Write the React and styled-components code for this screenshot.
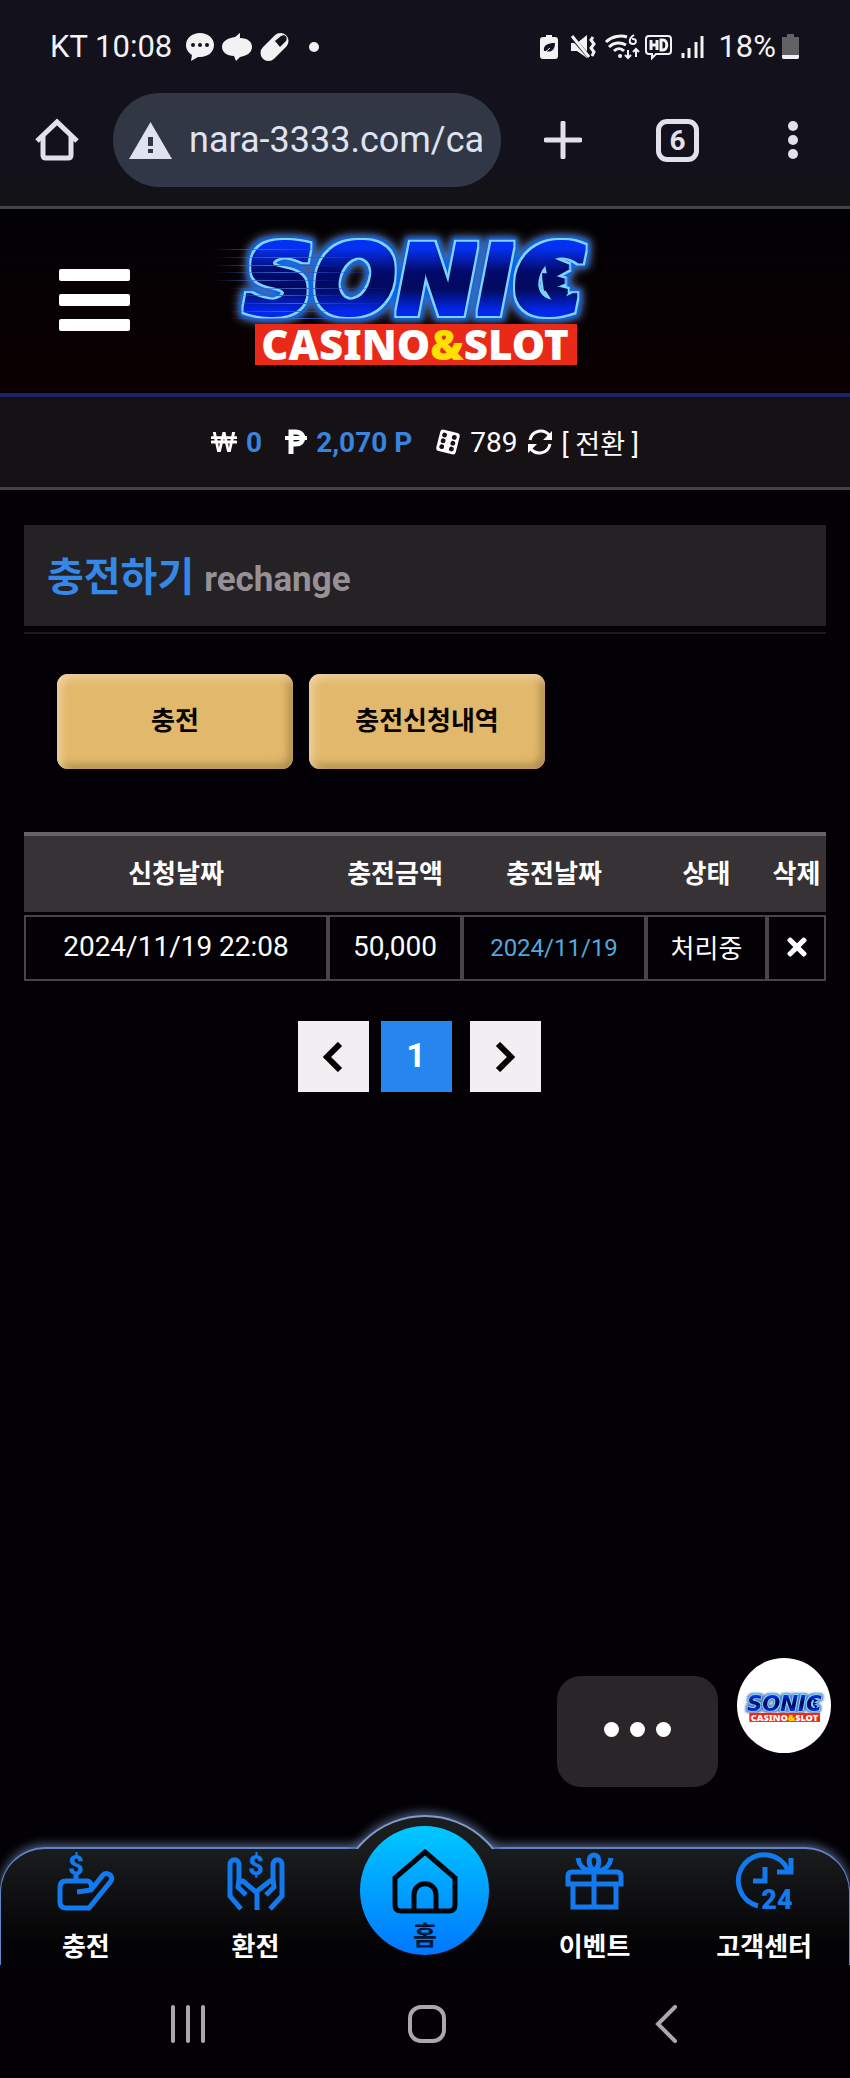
import React from 'react';
import styled, { createGlobalStyle } from 'styled-components';
import { FaTimes, FaWonSign } from 'react-icons/fa';

const tabs = [
	{ label: '충전', icon: <DepositIcon /> },
	{ label: '환전', icon: <WithdrawIcon /> },
	{ label: '홈', icon: <HouseIcon />, home: true },
	{ label: '이벤트', icon: <GiftIcon /> },
	{ label: '고객센터', icon: <SupportIcon /> },
];

const requests = [{ requested: '2024/11/19 22:08', amount: '50,000', charged: '2024/11/19', status: '처리중' }];

export default function App() {
	return (
		<Page>
			<GlobalStyle />
			<StatusBar />
			<BrowserBar />
			<Header>
				<MenuButton aria-label="메뉴">
					<span />
					<span />
					<span />
				</MenuButton>
				<LogoLink href="#" aria-label="SONIC CASINO&SLOT">
					<Logo id="main" width="410" height="155" />
				</LogoLink>
			</Header>
			<Balance>
				<FaWonSign size="26" color="#fff" />
				<Amount>0</Amount>
				<PointIcon />
				<Amount>2,070 P</Amount>
				<DiceIcon />
				<span>789</span>
				<RefreshIcon />
				<ConvertButton>[ 전환 ]</ConvertButton>
			</Balance>
			<Main>
				<Title>
					충전하기 <small>rechange</small>
				</Title>
				<Actions>
					<GoldButton>충전</GoldButton>
					<GoldButton>충전신청내역</GoldButton>
				</Actions>
				<RequestTable />
				<Pager aria-label="페이지">
					<PageButton aria-label="이전">
						<svg width="20" height="30" viewBox="0 0 20 30">
							<path d="M17 2L4 15l13 13" fill="none" stroke="#000" strokeWidth="6" />
						</svg>
					</PageButton>
					<PageButton $current>1</PageButton>
					<PageButton aria-label="다음">
						<svg width="20" height="30" viewBox="0 0 20 30">
							<path d="M3 2l13 13L3 28" fill="none" stroke="#000" strokeWidth="6" />
						</svg>
					</PageButton>
				</Pager>
			</Main>
			<Floating>
				<MoreButton aria-label="더보기">
					<i />
					<i />
					<i />
				</MoreButton>
				<ChatButton aria-label="SONIC">
					<Logo id="chat" width="90" height="34" />
				</ChatButton>
			</Floating>
			<TabBar>
				<Bump />
				{tabs.map((tab) => (
					<Tab key={tab.label} href="#" $home={tab.home}>
						{tab.icon}
						<span>{tab.label}</span>
					</Tab>
				))}
			</TabBar>
			<SystemBar />
		</Page>
	);
}

function RequestTable() {
	return (
		<Table>
			<colgroup>
				<col />
				<col width="134" />
				<col width="184" />
				<col width="121" />
				<col width="59" />
			</colgroup>
			<thead>
				<tr>
					<th>신청날짜</th>
					<th>충전금액</th>
					<th>충전날짜</th>
					<th>상태</th>
					<th>삭제</th>
				</tr>
			</thead>
			<tbody>
				{requests.map((r) => (
					<tr key={r.requested}>
						<td>{r.requested}</td>
						<td>{r.amount}</td>
						<td>
							<ChargedDate>{r.charged}</ChargedDate>
						</td>
						<StatusCell>{r.status}</StatusCell>
						<td>
							<DeleteButton aria-label="삭제">
								<FaTimes size="28" />
							</DeleteButton>
						</td>
					</tr>
				))}
			</tbody>
		</Table>
	);
}

function StatusBar() {
	return (
		<PhoneStatus>
			<StatusGroup>
				<span>KT 10:08</span>
				<svg width="140" height="30" viewBox="0 0 140 30" fill="#f2f2f4">
					<path d="M14 1C6 1 0 6 0 13c0 5 3 8 6 10l-1 6 7-4h2c8 0 14-5 14-12S22 1 14 1z" />
					<path d="M49 5c2-1 4-4 5-4v5c8 0 12 4 12 9 0 6-6 9-12 10l-4 4-2-5c-7 0-12-4-12-9 0-6 6-9 13-10z" />
					<rect x="72" y="7" width="33" height="16" rx="8" transform="rotate(-45 88.500 15)" />
					<path d="M89 9l6-5c4-2 7 1 5 5l-6 6z" fill="#13111b" />
					<circle cx="128" cy="15" r="5" />
					<g fill="#13111b">
						<circle cx="7" cy="13" r="2" />
						<circle cx="14" cy="13" r="2" />
						<circle cx="21" cy="13" r="2" />
					</g>
				</svg>
			</StatusGroup>
			<StatusGroup>
				<svg width="164" height="28" viewBox="0 0 164 28" fill="none" stroke="#f2f2f4" strokeWidth="2">
					<path d="M6 2h6v2h3q3 0 3 3v16q0 3-3 3H3q-3 0-3-3V7q0-3 3-3h3z" fill="#f2f2f4" stroke="none" />
					<path d="M4 18c-1-6 4-8 11-8 0 7-4 10-9 8" fill="#13111b" stroke="none" />
					<path d="M3 21l7-6" stroke="#f2f2f4" strokeWidth="1" />
					<path d="M31 10h6l10-8v23l-10-7h-6z" fill="#f2f2f4" stroke="none" />
					<path d="M30 2l20 23" stroke="#13111b" strokeWidth="4" />
					<path d="M32 3l17 21" strokeWidth="3" />
					<path d="M53 4l-2 3 3 4-3 4 3 4-2 4" strokeWidth="3" />
					<path d="M66 9c6-6 15-7 21-5M69 14c5-5 12-5 17-2M74 18c3-3 7-3 10 0" strokeWidth="3" />
					<path d="M80 23h.1" strokeWidth="4" strokeLinecap="round" />
					<path d="M94 2c-6 4-5 9-1 9s4-6-1-5M88 17v8m-3-3l3 3 3-3M96 24v-8m-3 3l3-3 3 3" />
					<path d="M109 3h19q3 0 3 3v12q0 3-3 3h-12l-4 4v-4h-3q-3 0-3-3V6q0-3 3-3z" />
					<path d="M111 7v10m0-5h6m0-5v10M121 7v10h2c5 0 5-10 0-10z" strokeWidth="3" />
					<path d="M143 25v-5M149 25V15M156 25V9M162 25V3" strokeWidth="3" />
				</svg>
				<span>18%</span>
				<svg width="17" height="25" viewBox="0 0 17 25">
					<path d="M5 0h7v3h5v22H0V3h5z" fill="#626166" />
					<path d="M0 21h17v2q0 2-2 2H2q-2 0-2-2z" fill="#f2f2f4" />
				</svg>
			</StatusGroup>
		</PhoneStatus>
	);
}

function BrowserBar() {
	return (
		<Toolbar>
			<ToolButton aria-label="홈">
				<svg width="44" height="44" viewBox="0 0 44 44" fill="none" stroke="#e3e0ec" strokeWidth="5">
					<path d="M2 23L22 4l20 19" />
					<path d="M8 18v19q0 3 3 3h22q3 0 3-3V18" />
				</svg>
			</ToolButton>
			<Address>
				<svg width="43" height="37" viewBox="0 0 43 37">
					<path d="M21.500 0L43 37H0z" fill="#dfe2ef" />
					<path d="M19 15h5v9h-5zM19 27h5v4h-5z" fill="#323743" />
				</svg>
				<input aria-label="주소" defaultValue="nara-3333.com/cash" />
			</Address>
			<ToolActions>
				<ToolButton aria-label="새 탭">
					<svg width="38" height="38" viewBox="0 0 38 38">
						<path d="M19 2v34M2 19h34" stroke="#e3e0ec" strokeWidth="5" strokeLinecap="round" />
					</svg>
				</ToolButton>
				<ToolButton aria-label="탭 6개">
					<TabCount>6</TabCount>
				</ToolButton>
				<ToolButton aria-label="더보기">
					<svg width="10" height="38" viewBox="0 0 10 38" fill="#e3e0ec">
						<circle cx="5" cy="5" r="5" />
						<circle cx="5" cy="19" r="5" />
						<circle cx="5" cy="33" r="5" />
					</svg>
				</ToolButton>
			</ToolActions>
		</Toolbar>
	);
}

function SystemBar() {
	return (
		<SystemNav>
			<button aria-label="최근 앱">
				<svg width="34" height="38" viewBox="0 0 34 38">
					<path d="M2 2v34M17 2v34M32 2v34" stroke="#aaa8ad" strokeWidth="4" strokeLinecap="round" />
				</svg>
			</button>
			<button aria-label="홈 화면">
				<svg width="38" height="38" viewBox="0 0 38 38">
					<rect x="2" y="2" width="34" height="34" rx="11" fill="none" stroke="#aaa8ad" strokeWidth="4" />
				</svg>
			</button>
			<button aria-label="뒤로">
				<svg width="22" height="38" viewBox="0 0 22 38">
					<path d="M20 2L3 19l17 17" fill="none" stroke="#aaa8ad" strokeWidth="4" strokeLinecap="round" />
				</svg>
			</button>
		</SystemNav>
	);
}

function Logo({ id, width, height }) {
	return (
		<svg width={width} height={height} viewBox="208 215 410 155" overflow="visible" aria-hidden="true">
			<defs>
				<linearGradient id={`${id}-fill`} gradientUnits="userSpaceOnUse" x1="0" y1="243" x2="0" y2="317">
					<stop offset="0.05" stopColor="#0430f0" />
					<stop offset="0.35" stopColor="#020a6c" />
					<stop offset="0.65" stopColor="#020a5c" />
					<stop offset="0.95" stopColor="#0228f0" />
				</linearGradient>
				<linearGradient id={`${id}-speed`}>
					<stop offset="0" stopColor="#3b62c8" stopOpacity="0" />
					<stop offset="0.4" stopColor="#3b62c8" />
					<stop offset="1" stopColor="#1034d8" stopOpacity="0" />
				</linearGradient>
				{/* fattened letters, cyan edge, solid blue rim, soft grey halo */}
				<filter id={`${id}-glow`} x="-10%" y="-30%" width="120%" height="160%" colorInterpolationFilters="sRGB">
					<feMorphology in="SourceAlpha" operator="dilate" radius="7" result="wide" />
					<feGaussianBlur in="wide" stdDeviation="5" result="soft" />
					<feFlood floodColor="#6379a2" />
					<feComposite in2="soft" operator="in" result="halo" />
					<feMorphology in="SourceAlpha" operator="dilate" radius="6" result="near" />
					<feGaussianBlur in="near" stdDeviation="2" result="nearSoft" />
					<feFlood floodColor="#0a62ea" />
					<feComposite in2="nearSoft" operator="in" result="rim" />
					<feMorphology in="SourceAlpha" operator="dilate" radius="4" result="edge" />
					<feFlood floodColor="#7fd4ff" />
					<feComposite in2="edge" operator="in" result="cyan" />
					<feMorphology in="SourceGraphic" operator="dilate" radius="2" result="fat" />
					<feMerge>
						<feMergeNode in="halo" />
						<feMergeNode in="rim" />
						<feMergeNode in="cyan" />
						<feMergeNode in="fat" />
					</feMerge>
				</filter>
			</defs>
			<g filter={`url(#${id}-glow)`} fill={`url(#${id}-fill)`}>
				<text x="244" y="314" fontFamily="'DejaVu Sans', sans-serif" fontWeight="700" fontStyle="italic" fontSize="97">
					SONIC
				</text>
				<path d="M546 258l22 9-18 10zM544 275l20 6-18 8zM546 286l20 5-8 14z" />
			</g>
			{[249, 257, 265, 272, 280, 288, 295, 303, 311, 318].map((y, i) => (
				<rect key={y} x={i < 5 ? 214 : 228} y={y} width={i % 2 ? 170 : 130} height="1" fill={`url(#${id}-speed)`} />
			))}
			<rect x="255" y="324" width="322" height="41" fill="#ea2a18" />
			<text x="415" y="360" textAnchor="middle" fontFamily="'Noto Sans', sans-serif" fontWeight="900" fontSize="42" fill="#fff">
				CASINO<tspan fill="#ffe100">&amp;</tspan>SLOT
			</text>
		</svg>
	);
}

function PointIcon() {
	return (
		<svg width="22" height="26" viewBox="0 0 22 26" fill="none" stroke="#fff">
			<path d="M6 25V3h5c9 0 9 12 0 12H6" strokeWidth="5" />
			<path d="M0 9h22" strokeWidth="4" />
		</svg>
	);
}

function DiceIcon() {
	return (
		<svg width="26" height="26" viewBox="0 0 26 26">
			<g transform="rotate(14 13 13)">
				<rect x="3" y="2" width="20" height="22" rx="3" fill="#fff" />
				<g fill="#15101a">
					<circle cx="8" cy="7" r="2.400" />
					<circle cx="8" cy="13" r="2.400" />
					<circle cx="8" cy="19" r="2.400" />
					<circle cx="18" cy="7" r="2.400" />
					<circle cx="18" cy="13" r="2.400" />
					<circle cx="18" cy="19" r="2.400" />
				</g>
			</g>
		</svg>
	);
}

function RefreshIcon() {
	return (
		<svg width="26" height="26" viewBox="0 0 26 26">
			<path d="M3 11C5 1 17-1 23 7M23 15C21 25 9 27 3 19" fill="none" stroke="#fff" strokeWidth="3" />
			<path d="M25 2v9h-9zM1 24v-9h9z" fill="#fff" />
		</svg>
	);
}

function DepositIcon() {
	return (
		<TabIcon viewBox="0 0 57 57">
			<text x="19" y="22" textAnchor="middle" fontSize="27">$</text>
			<path d="M19 22v6" />
			<path d="M20 39l14-2c2-5-1-9-4-9H9q-6 0-6 6v15q0 6 6 6h23l22-27c3-5-4-10-8-6L34 37" />
		</TabIcon>
	);
}

function WithdrawIcon() {
	return (
		<TabIcon viewBox="0 0 57 57">
			<text x="29" y="22" textAnchor="middle" fontSize="27">$</text>
			<path d="M14 56L3 43V12c0-7 9-7 9 0v14l-1 8 8 8" />
			<path d="M43 56l12-13V12c0-7-9-7-9 0v14l1 8-8 8" />
			<path d="M12 29l4-1 13 11 14-11 3 1M30 57V38" />
		</TabIcon>
	);
}

function HouseIcon() {
	return (
		<svg width="66" height="66" viewBox="0 0 66 66" fill="none" stroke="#02060c" strokeWidth="5">
			<path d="M3 29L33 3l30 26v27q0 6-6 6H9q-6 0-6-6z" />
			<path d="M22 62V46c0-15 22-15 22 0v16" />
		</svg>
	);
}

function GiftIcon() {
	return (
		<TabIcon viewBox="0 0 57 57">
			<path d="M2 31V23q0-4 4-4h45q4 0 4 4v8zM7 31v23h43V31M28 19v35" />
			<path d="M28 18c-7-6-6-16 0-16s7 10 0 16zM12 5c1 7 4 11 12 13M45 5c-1 7-4 11-12 13" />
		</TabIcon>
	);
}

function SupportIcon() {
	return (
		<TabIcon viewBox="0 0 57 57">
			<path d="M22 53A26 26 0 1 1 52 17" />
			<path d="M55 5v14H41M29 14v14H17" />
			<text x="41" y="56" textAnchor="middle" fontSize="27">24</text>
		</TabIcon>
	);
}

const kr = `Roboto, 'Noto Sans CJK KR', sans-serif`;

const GlobalStyle = createGlobalStyle`
	* {
		box-sizing: border-box;
	}
	body {
		margin: 0;
		background: #030105;
		color: #fff;
		font-family: ${kr};
	}
	button {
		padding: 0;
		border: 0;
		background: none;
		color: inherit;
		font: inherit;
		cursor: pointer;
	}
	a {
		color: inherit;
		text-decoration: none;
	}
	svg {
		flex-shrink: 0;
	}
`;

const Page = styled.div`
	display: flex;
	flex-direction: column;
	min-height: 100vh;
`;

const PhoneStatus = styled.div`
	display: flex;
	justify-content: space-between;
	align-items: center;
	height: 93px;
	padding: 0 51px 0 50px;
	background: #13111b;
	color: #f2f2f4;
	font-size: 31px;
`;

const StatusGroup = styled.div`
	display: flex;
	align-items: center;
	gap: 14px;

	svg + span {
		margin-right: -8px;
	}
`;

const Toolbar = styled.div`
	display: flex;
	align-items: center;
	padding-bottom: 19px;
	background: linear-gradient(#13111b 70%, #121315);
	border-bottom: 3px solid #454347;
`;

const ToolButton = styled.button`
	display: flex;
	justify-content: center;
	align-items: center;
	min-width: 113px;
	height: 94px;
`;

const Address = styled.div`
	flex: 1;
	display: flex;
	align-items: center;
	gap: 17px;
	min-width: 0;
	height: 94px;
	padding: 0 19px 0 16px;
	border-radius: 47px;
	background: linear-gradient(#323743, #323749);

	input {
		flex: 1;
		min-width: 0;
		padding: 0;
		border: 0;
		background: none;
		color: #dfe2ef;
		font: 36px ${kr};
	}
`;

const ToolActions = styled.div`
	display: grid;
	grid-template-columns: repeat(3, 1fr);
	width: 345px;
	margin-left: 4px;
`;

const TabCount = styled.span`
	width: 43px;
	height: 43px;
	border: 5px solid #e3e0ec;
	border-radius: 11px;
	color: #e3e0ec;
	font: bold 28px/33px ${kr};
`;

const Header = styled.header`
	display: flex;
	align-items: center;
	justify-content: space-between;
	height: 188px;
	padding: 0 232px 0 59px;
	border-bottom: 4px solid #1b2468;
	background: linear-gradient(#020104, #0b0001);
`;

const MenuButton = styled.button`
	display: flex;
	flex-direction: column;
	gap: 13px;
	width: 71px;
	padding-bottom: 2px;

	span {
		height: 12px;
		border-radius: 2px;
		background: #fff;
	}
`;

const LogoLink = styled.a`
	display: flex;
	padding-bottom: 18px;
`;

const Balance = styled.div`
	display: flex;
	justify-content: center;
	align-items: center;
	gap: 9px;
	height: 93px;
	border-bottom: 3px solid #454247;
	background: #161115;
	font-size: 28px;
`;

const Amount = styled.b`
	margin-right: 14px;
	color: #3984dc;
`;

const ConvertButton = styled.button`
	font-size: 27px;
`;

const Main = styled.main`
	flex: 1;
	padding: 35px 24px;
`;

const Title = styled.h1`
	margin: 0 0 48px;
	padding: 5px 23px 0;
	background: #252225;
	color: #3388e8;
	font-size: 40px;
	line-height: 96px;
	box-shadow: 0 6px #030105, 0 8px #1b1a1c;

	small {
		color: #979196;
		font-size: 35px;
		line-height: 1;
	}
`;

const Actions = styled.div`
	display: flex;
	gap: 16px;
	padding-left: 33px;
`;

const GoldButton = styled.button`
	width: 236px;
	height: 95px;
	padding-bottom: 6px;
	border-radius: 11px;
	background: #e2b86c;
	box-shadow: inset 4px 4px 8px #f0d3a2, inset -4px -4px 8px #a98648;
	color: #080400;
	font-size: 26px;
	font-weight: bold;
`;

const Table = styled.table`
	width: 100%;
	margin-top: 63px;
	border-spacing: 0;
	table-layout: fixed;
	text-align: center;
	font-size: 28px;

	th {
		height: 83px;
		padding: 0 0 5px;
		border-top: 4px solid #676266;
		border-bottom: 3px solid #030105;
		background: #373236;
		font-size: 26px;
	}

	td {
		height: 66px;
		padding: 0 0 3px;
		border: 2px solid #484448;
	}
`;

const ChargedDate = styled.span`
	color: #55a7dd;
	font-size: 24px;
`;

const StatusCell = styled.td`
	font-size: 26px;
`;

const DeleteButton = styled.button`
	display: flex;
	margin: auto;
`;

const Pager = styled.nav`
	display: flex;
	justify-content: center;
	gap: 12px;
	margin-top: 40px;
	padding-right: 12px;
`;

const PageButton = styled.button`
	display: flex;
	justify-content: center;
	align-items: center;
	width: 71px;
	height: 71px;
	margin-right: ${(p) => (p.$current ? '6px' : '0')};
	padding-bottom: ${(p) => (p.$current ? '4px' : '0')};
	background: ${(p) => (p.$current ? '#2785ef' : '#f2eef2')};
	font-size: 34px;
	font-weight: bold;
`;

const Floating = styled.div`
	display: flex;
	justify-content: flex-end;
	gap: 19px;
	padding: 0 19px 60px;
`;

const MoreButton = styled.button`
	display: flex;
	justify-content: center;
	align-items: center;
	gap: 11px;
	width: 161px;
	height: 111px;
	margin-top: 18px;
	padding-bottom: 4px;
	border-radius: 24px;
	background: #2a2529;

	i {
		width: 15px;
		height: 15px;
		border-radius: 50%;
		background: #fff;
	}
`;

const ChatButton = styled.button`
	display: flex;
	justify-content: center;
	align-items: center;
	width: 94px;
	height: 95px;
	border-radius: 50%;
	background: #fff;
`;

const TabBar = styled.nav`
	position: relative;
	display: grid;
	grid-template-columns: repeat(5, 1fr);
	height: 118px;
	border: solid #5f86c8;
	border-width: 2px 1px 0;
	border-radius: 45px 45px 0 0;
	background: linear-gradient(#1a1c1d, #030204 85%);
	box-shadow: 0 -3px 10px #4a5878;
	clip-path: inset(-60px 0 0);
`;

// round part of the bar outline over the home tab, cut at the bar's top line
const Bump = styled.div`
	position: absolute;
	top: -34px;
	left: calc(50% - 88px);
	width: 176px;
	height: 176px;
	border: 2px solid #7f9bcb;
	border-radius: 50%;
	background: #1a1c1d;
	box-shadow: 0 -3px 10px #4a5878;
	clip-path: inset(-20px -20px 142px);
`;

const Tab = styled.a`
	position: relative;
	display: flex;
	flex-direction: column;
	align-items: center;
	justify-self: center;
	gap: ${(p) => (p.$home ? '6px' : '22px')};
	width: ${(p) => (p.$home ? '129px' : 'auto')};
	height: ${(p) => (p.$home ? '129px' : 'auto')};
	margin-top: ${(p) => (p.$home ? '-23px' : '0')};
	padding-top: ${(p) => (p.$home ? '23px' : '4px')};
	border-radius: ${(p) => (p.$home ? '50%' : '0')};
	background: ${(p) => (p.$home ? 'linear-gradient(#00c8ff, #0077ff)' : 'none')};
	color: ${(p) => (p.$home ? '#02163a' : '#fff')};
	font-size: 26px;
	font-weight: bold;
	line-height: 30px;
`;

const TabIcon = styled.svg`
	width: 57px;
	height: 57px;
	overflow: visible;
	fill: none;
	stroke: #1279ee;
	stroke-width: 5px;

	text {
		fill: #1279ee;
		stroke: none;
		font-family: Roboto, sans-serif;
		font-weight: 900;
	}
`;

const SystemNav = styled.nav`
	display: flex;
	justify-content: center;
	align-items: center;
	height: 113px;
	padding: 4px 0 0 3px;

	button {
		display: flex;
		justify-content: center;
		width: 239px;
	}
`;
